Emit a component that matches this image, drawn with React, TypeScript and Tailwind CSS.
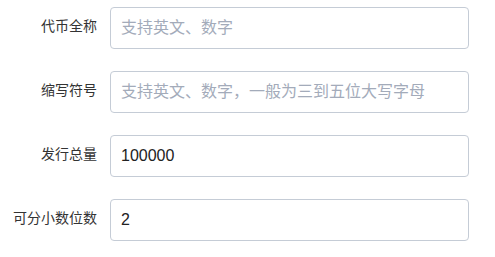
const fields = [
  { label: "代币全称", placeholder: "支持英文、数字", value: "" },
  { label: "缩写符号", placeholder: "支持英文、数字，一般为三到五位大写字母", value: "" },
  { label: "发行总量", placeholder: "", value: "100000" },
  { label: "可分小数位数", placeholder: "", value: "2" },
];

export default function App() {
  return (
    <div
      className="min-h-screen w-[495px] bg-white pt-[7px]"
      style={{ fontFamily: '"Liberation Sans", "Noto Sans CJK SC", sans-serif' }}
    >
      <div className="flex flex-col gap-[22px]">
        {fields.map((f) => (
          <div key={f.label} className="flex items-start">
            <label className="w-[97px] pt-[9px] text-right text-[14px] leading-[20px] text-[#333]">
              {f.label}
            </label>
            <input
              readOnly
              defaultValue={f.value}
              placeholder={f.placeholder}
              className="ml-[13px] h-[42px] w-[359px] rounded-[4px] border border-[#c5ccd6] bg-white px-[10px] text-[16px] text-[#222] outline-none placeholder:text-[#a3abba]"
            />
          </div>
        ))}
      </div>
    </div>
  );
}
